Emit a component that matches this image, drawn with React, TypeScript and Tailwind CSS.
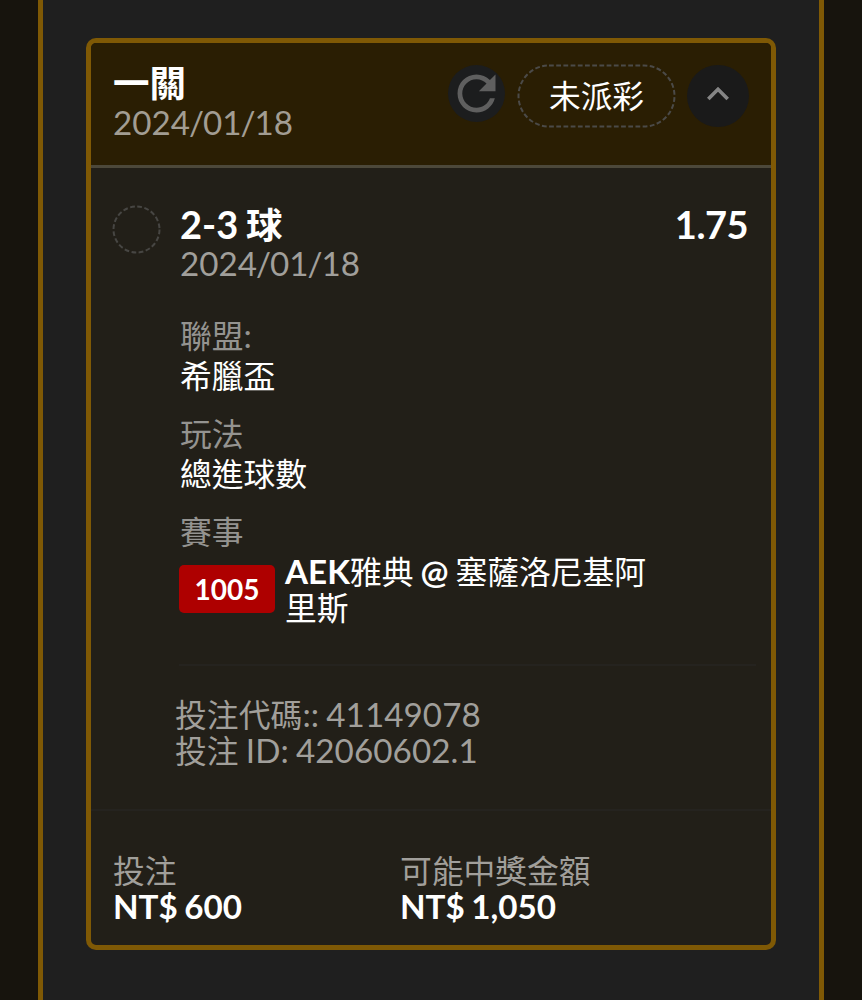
import React from 'react';

function Cjk({ children }: { children: React.ReactNode }) {
  return <span className="text-[0.957em] leading-[0]">{children}</span>;
}

function DateText({ value }: { value: string }) {
  return (
    <>
      {value.split('/').map((part, i) => (
        <React.Fragment key={i}>
          {i > 0 && <span className="-mx-[1px]">/</span>}
          {part}
        </React.Fragment>
      ))}
    </>
  );
}

function Field({ label, children, colon }: { label: string; children: React.ReactNode; colon?: boolean }) {
  return (
    <div className="mb-[20px]">
      <div className="h-[39px] leading-[37px] text-[#949390]"><Cjk>{label}</Cjk>{colon && ':'}</div>
      <div className="h-[39px] leading-[39px] text-white"><Cjk>{children}</Cjk></div>
    </div>
  );
}

function Header() {
  return (
    <header className="flex h-[125px] justify-between border-b-[3px] border-[#4c483a] bg-[#2a1e03] pl-[22px] pr-[22px] pt-[20px]">
      <div>
        <h1 className="h-[41px] text-[36.5px] font-bold leading-[41px] text-white">一關</h1>
        <div className="leading-[36px] text-[#a29d93]"><DateText value="2024/01/18" /></div>
      </div>
      <div className="flex items-start">
        <button className="mt-[2px] flex size-[57px] items-center justify-center rounded-full bg-[#1c1d1e]" aria-label="refresh">
          <svg width="57" height="57" viewBox="0 0 24 24" fill="#5f5f5f">
            <path d="M17.65 6.35C16.2 4.9 14.21 4 12 4c-4.42 0-7.99 3.58-7.99 8s3.57 8 7.99 8c3.73 0 6.84-2.55 7.73-6h-2.08c-.82 2.33-3.04 4-5.65 4-3.31 0-6-2.69-6-6s2.69-6 6-6c1.66 0 3.14.69 4.22 1.78L13 11h7V4l-2.35 2.35z" />
          </svg>
        </button>
        <div className="ml-[12px] mt-px flex h-[64px] w-[159px] items-center justify-center">
          <svg className="absolute" width="159" height="64" viewBox="0 0 159 64" fill="none">
            <rect x="1.5" y="1.5" width="156" height="61" rx="30.5" stroke="#4b4a48" strokeWidth="2" strokeDasharray="4.8 2.4" />
          </svg>
          <span className="text-[31.7px] leading-[36px] text-white">未派彩</span>
        </div>
        <button className="ml-[11px] mt-[2px] flex size-[62px] items-center justify-center rounded-full bg-[#1a1a1a]" aria-label="collapse">
          <svg className="mb-[5px]" width="44" height="44" viewBox="0 0 24 24" fill="#858585">
            <path d="M12 8l-6 6 1.41 1.41L12 10.83l4.59 4.58L18 14z" />
          </svg>
        </button>
      </div>
    </header>
  );
}

export default function App() {
  return (
    <div className="h-[1000px] w-[862px] overflow-hidden bg-[#17140d] px-[38px] font-[Lato,'Noto_Sans_CJK_TC',sans-serif] text-[33.2px] [word-spacing:-1.5px]">
      <main className="h-full border-x-[5px] border-[#7f5905] bg-[#1f1f1f] px-[43px] pt-[38px]">
        <article className="h-[912px] overflow-hidden rounded-[10px] border-[5px] border-[#7f5905] bg-[#221f18]">
          <Header />
          <section className="flex h-[643px] border-b-2 border-[#25231f] pl-[21px] pr-[15px] pt-[37px]">
            <svg className="shrink-0" width="49" height="49" viewBox="0 0 49 49" fill="none">
              <circle cx="24.5" cy="24.5" r="23" stroke="#474643" strokeWidth="2" strokeDasharray="4.8 2.43" />
            </svg>
            <div className="ml-[19px] flex-1">
              <div className="flex h-[41px] justify-between pr-[8px] text-[38px] font-bold leading-[38px] text-white">
                <h2>2-3 <span className="text-[36.5px] leading-[0]">球</span></h2>
                <span className="tracking-[-0.5px]">1.75</span>
              </div>
              <div className="leading-[35px] text-[#a19f9b]"><DateText value="2024/01/18" /></div>
              <div className="pt-[36px]">
                <Field label="聯盟" colon>希臘盃</Field>
                <Field label="玩法">總進球數</Field>
                <div className="h-[39px] leading-[37px] text-[#949390]"><Cjk>賽事</Cjk></div>
              </div>
              <div className="-ml-px flex h-[114px] items-start border-b-2 border-[#25231f]">
                <span className="mt-[13px] h-[48px] w-[96px] rounded-[5px] bg-[#ae0000] text-center text-[28px] font-bold leading-[49px] text-white">1005</span>
                <div className="ml-[10px] mt-px w-[375px] leading-[36px] text-white">
                  <b>AEK</b><Cjk>雅典</Cjk> <b>@</b> <Cjk>塞薩洛尼基阿<br />里斯</Cjk>
                </div>
              </div>
              <div className="-ml-[5px] pt-[30px] leading-[36px] tracking-[0.08px] text-[#a19f9b]">
                <div><Cjk>投注代碼</Cjk>:: 41149078</div>
                <div><Cjk>投注</Cjk> ID: 42060602.1</div>
              </div>
            </div>
          </section>
          <footer className="grid grid-cols-[287px_1fr] pl-[22px] pt-[41px] leading-[36px]">
            <div>
              <div className="text-[#a19f9b]"><Cjk>投注</Cjk></div>
              <div className="font-bold text-white">NT$ 600</div>
            </div>
            <div>
              <div className="text-[#a19f9b]"><Cjk>可能中獎金額</Cjk></div>
              <div className="font-bold text-white">NT$ 1,050</div>
            </div>
          </footer>
        </article>
      </main>
    </div>
  );
}
